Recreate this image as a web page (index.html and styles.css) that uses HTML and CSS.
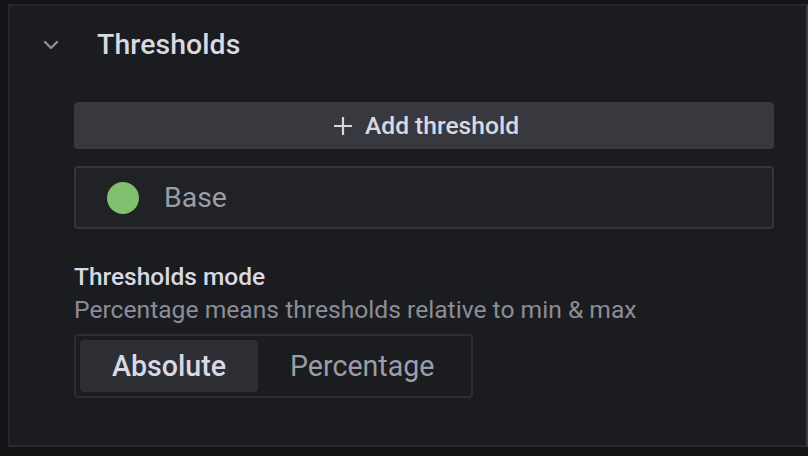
FILE: index.html
```html
<!DOCTYPE html>
<html>
<head>
<meta charset="utf-8">
<link rel="stylesheet" href="styles.css">
</head>
<body>
<div class="editor">
  <div class="section-header">
    <svg class="chevron" width="16" height="10" viewBox="0 0 16 10"><path d="M2 2 L8 8 L14 2" fill="none" stroke="#8d8e98" stroke-width="2.4" stroke-linecap="round" stroke-linejoin="round"/></svg>
    <span class="section-title">Thresholds</span>
  </div>
  <div class="section-body">
    <button class="add-btn">
      <svg class="plus" width="20" height="20" viewBox="0 0 20 20"><path d="M10 1 V19 M1 10 H19" stroke="#d6d7de" stroke-width="2.2" fill="none"/></svg>
      <span>Add threshold</span>
    </button>
    <div class="threshold-row">
      <span class="dot"></span>
      <span class="base-label">Base</span>
    </div>
    <div class="field">
      <div class="field-label">Thresholds mode</div>
      <div class="field-desc">Percentage means thresholds relative to min &amp; max</div>
      <div class="radio-group">
        <span class="radio active">Absolute</span>
        <span class="radio">Percentage</span>
      </div>
    </div>
  </div>
</div>
</body>
</html>
```
FILE: styles.css
```css
html, body {
  margin: 0;
  padding: 0;
  background: #131417;
  width: 808px;
  height: 456px;
  overflow: hidden;
  font-family: Roboto, "Liberation Sans", sans-serif;
}

.editor {
  margin: 4px 0 0 8px;
  height: 439px;
  background: #1b1c20;
  border-top: 2px solid #26272c;
  border-left: 2px solid #26272c;
  border-right: 2px solid #3b3c41;
  border-bottom: 2px solid #2a2b30;
}

.section-header {
  height: 76px;
  display: flex;
  align-items: center;
  padding-left: 33px;
  gap: 38px;
}

.chevron {
  display: block;
  margin-top: 2px;
}

.section-title {
  font-size: 28.4px;
  font-weight: 500;
  color: #d8d9e2;
  letter-spacing: 0.1px;
}

.section-body {
  padding: 20px 32px 0 64px;
}

.add-btn {
  width: 100%;
  height: 47px;
  border: none;
  border-radius: 4px;
  background: #38393e;
  display: flex;
  align-items: center;
  justify-content: center;
  gap: 12px;
  font-family: Roboto, "Liberation Sans", sans-serif;
  font-size: 24.6px;
  font-weight: 500;
  color: #d8d9e2;
  padding: 0 0 0 4px;
}

.plus {
  display: block;
}

.threshold-row {
  margin-top: 17px;
  height: 59px;
  border: 2px solid #35363b;
  border-radius: 4px;
  background: #212226;
  display: flex;
  align-items: center;
  padding-left: 31px;
  gap: 25px;
}

.dot {
  width: 32px;
  height: 32px;
  border-radius: 50%;
  background: #80c06e;
}

.base-label {
  font-size: 28.4px;
  color: #9c9da6;
}

.field {
  margin-top: 33px;
}

.field-label {
  font-size: 24.5px;
  font-weight: 500;
  color: #d8d9e2;
  line-height: 30px;
}

.field-desc {
  font-size: 24.65px;
  color: #8c8d97;
  line-height: 30px;
  margin-top: 3px;
}

.radio-group {
  margin-top: 9px;
  display: inline-flex;
  border: 2px solid #2d2e33;
  border-radius: 4px;
  padding: 4px;
}

.radio {
  height: 52px;
  display: flex;
  align-items: center;
  padding: 0 32px;
  font-size: 28.6px;
  color: #9c9da6;
  border-radius: 4px;
}

.radio.active {
  background: #2e2f35;
  color: #d8d9e2;
  font-weight: 500;
}
```
